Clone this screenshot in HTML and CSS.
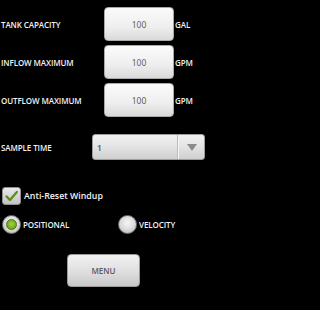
FILE: index.html
```html
<!DOCTYPE html>
<html>
<head>
<meta charset="utf-8">
<link rel="stylesheet" href="styles.css">
</head>
<body>
<div class="screen">
  <div class="fields">
    <div class="label">TANK CAPACITY</div>
    <div class="field">100</div>
    <div class="unit">GAL</div>
    <div class="label">INFLOW MAXIMUM</div>
    <div class="field">100</div>
    <div class="unit">GPM</div>
    <div class="label">OUTFLOW MAXIMUM</div>
    <div class="field">100</div>
    <div class="unit">GPM</div>
  </div>
  <div class="sample-row">
    <div class="label sample-label">SAMPLE TIME</div>
    <div class="spinner">
      <div class="spinner-value">1</div>
      <div class="spinner-btn"><span class="arrow"></span></div>
    </div>
  </div>
  <div class="check-row">
    <span class="checkbox">
      <svg width="19" height="18" viewBox="0 0 19 18"><path d="M4 9.5 L7.8 13.5 L15.5 4.5" fill="none" stroke="#5f8f17" stroke-width="2.6" stroke-linecap="round" stroke-linejoin="round"/></svg>
    </span>
    <span class="check-label">Anti-Reset Windup</span>
  </div>
  <div class="radio-row">
    <div class="radio-item pos">
      <span class="radio on"><span class="dot"></span></span>
      <span class="radio-label">POSITIONAL</span>
    </div>
    <div class="radio-item">
      <span class="radio"></span>
      <span class="radio-label">VELOCITY</span>
    </div>
  </div>
  <div class="btn-row">
    <div class="menu-btn">MENU</div>
  </div>
</div>
</body>
</html>
```
FILE: styles.css
```css
html, body {
  margin: 0;
  padding: 0;
  background: #000;
}
.screen {
  width: 207px;
  height: 310px;
  background: #000;
  color: #fff;
  font-family: "Open Sans", "Liberation Sans", sans-serif;
  overflow: hidden;
}
.fields {
  display: grid;
  grid-template-columns: 104px 70px 1fr;
  grid-auto-rows: 34px;
  row-gap: 4px;
  padding-top: 7px;
  align-items: center;
}
.label {
  padding-left: 1px;
  font-size: 8px;
  font-weight: 600;
  letter-spacing: -0.1px;
  color: #f2f2f2;
  white-space: nowrap;
}
.field {
  height: 34px;
  box-sizing: border-box;
  border-radius: 4px;
  border: 1px solid #a9a9a9;
  background: linear-gradient(#fbfbfb, #eeeeee 60%, #d9d9d9);
  color: #555;
  font-size: 8.5px;
  display: flex;
  align-items: center;
  justify-content: center;
}
.unit {
  padding-left: 1px;
  font-size: 8px;
  font-weight: 600;
  letter-spacing: -0.1px;
  color: #f2f2f2;
}
.sample-row {
  display: flex;
  align-items: center;
  margin-top: 17px;
  height: 26px;
}
.sample-label {
  width: 91px;
}
.spinner {
  width: 113px;
  height: 26px;
  box-sizing: border-box;
  border-radius: 3px;
  border: 1px solid #9d9d9d;
  background: linear-gradient(#f3f3f3, #e3e3e3 50%, #cfcfcf);
  display: flex;
}
.spinner-value {
  flex: 1;
  padding-left: 4px;
  display: flex;
  align-items: center;
  font-size: 8.5px;
  font-weight: 600;
  color: #555;
  border-right: 1px solid #bdbdbd;
}
.spinner-btn {
  width: 25px;
  display: flex;
  align-items: center;
  justify-content: center;
  border-left: 1px solid #f4f4f4;
}
.arrow {
  width: 0;
  height: 0;
  border-left: 5px solid transparent;
  border-right: 5px solid transparent;
  border-top: 7px solid #8a8a8a;
}
.check-row {
  display: flex;
  align-items: center;
  margin-top: 27px;
  height: 18px;
  padding-left: 2px;
}
.checkbox {
  width: 19px;
  height: 18px;
  box-sizing: border-box;
  border-radius: 3px;
  border: 1px solid #8f8f8f;
  background: linear-gradient(#e9e9e9, #c3c3c3);
  display: flex;
  align-items: center;
  justify-content: center;
}
.checkbox svg {
  display: block;
}
.check-label {
  margin-left: 3px;
  font-size: 8.8px;
  font-weight: 600;
  color: #f2f2f2;
}
.radio-row {
  display: flex;
  align-items: center;
  margin-top: 10px;
  height: 19px;
  padding-left: 2px;
}
.radio-item {
  display: flex;
  align-items: center;
}
.radio-item.pos {
  width: 116px;
}
.radio {
  width: 19px;
  height: 19px;
  box-sizing: border-box;
  border-radius: 50%;
  border: 1px solid #777;
  background: radial-gradient(circle at 50% 40%, #f6f6f6, #d8d8d8 55%, #a9a9a9);
  display: flex;
  align-items: center;
  justify-content: center;
}
.radio .dot {
  width: 9px;
  height: 9px;
  border-radius: 50%;
  background: radial-gradient(circle at 50% 45%, #9fd14a, #7aad22 60%, #4f7d0f);
  border: 1px solid #4c760c;
}
.radio-label {
  margin-left: 2px;
  font-size: 8px;
  font-weight: 600;
  letter-spacing: -0.1px;
  color: #f2f2f2;
}
.btn-row {
  margin-top: 20px;
  padding-left: 67px;
}
.menu-btn {
  width: 73px;
  height: 33px;
  box-sizing: border-box;
  border-radius: 4px;
  border: 1px solid #9a9a9a;
  background: linear-gradient(#f2f2f2, #dedede 55%, #c8c8c8);
  color: #5a5a5a;
  font-size: 8px;
  font-weight: 600;
  display: flex;
  align-items: center;
  justify-content: center;
}
```
